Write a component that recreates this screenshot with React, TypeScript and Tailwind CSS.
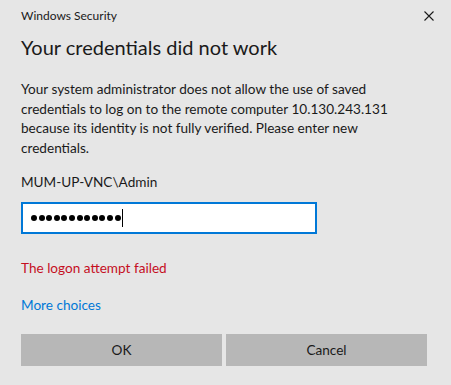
import React from "react";

export default function App() {
  return (
    <main
      className="h-[385px] w-[451px] overflow-hidden bg-[#e6e6e6] text-[#1a1a1a]"
      style={{ fontFamily: 'Lato, "Noto Sans", sans-serif' }}
    >
      <div className="flex h-[32px] items-center justify-between pl-[21px] pr-[17px]">
        <span className="text-[12px] leading-[16px]">Windows Security</span>
        <svg width="10" height="10" viewBox="0 0 10 10">
          <path d="M0.5 0.5 L9.5 9.5 M9.5 0.5 L0.5 9.5" stroke="currentColor" strokeWidth="1.1" />
        </svg>
      </div>

      <div className="px-[21px]">
        <h1 className="text-[20px] leading-[30px] font-normal">Your credentials did not work</h1>

        <p className="mt-[18px] w-[390px] text-[13.6px] leading-[19.5px]">
          Your system administrator does not allow the use of saved credentials to log on to the
          remote computer 10.130.243.131 because its identity is not fully verified. Please enter new
          credentials.
        </p>

        <p className="mt-[14px] text-[13.6px] leading-[20px]">MUM-UP-VNC\Admin</p>

        <div className="mt-[10px] flex h-[32px] w-[296px] items-center border-2 border-[#0078d7] bg-white pl-[8px]">
          <span className="flex items-center gap-[1.6px]">
            {Array.from({ length: 12 }).map((_, i) => (
              <span key={i} className="block h-[6px] w-[6px] rounded-full bg-black" />
            ))}
          </span>
          <span className="ml-[1px] block h-[18px] w-px bg-black" />
        </div>

        <p className="mt-[24px] text-[13.6px] leading-[20px] text-[#c50f1f]">The logon attempt failed</p>

        <p className="mt-[17px] text-[13.6px] leading-[20px] text-[#0078d7]">More choices</p>

        <div className="mt-[19px] grid grid-cols-2 gap-[4px] pr-[3px]">
          <button className="h-[32px] bg-[#b7b7b7] text-[13.6px]">OK</button>
          <button className="h-[32px] bg-[#b7b7b7] text-[13.6px]">Cancel</button>
        </div>
      </div>
    </main>
  );
}
